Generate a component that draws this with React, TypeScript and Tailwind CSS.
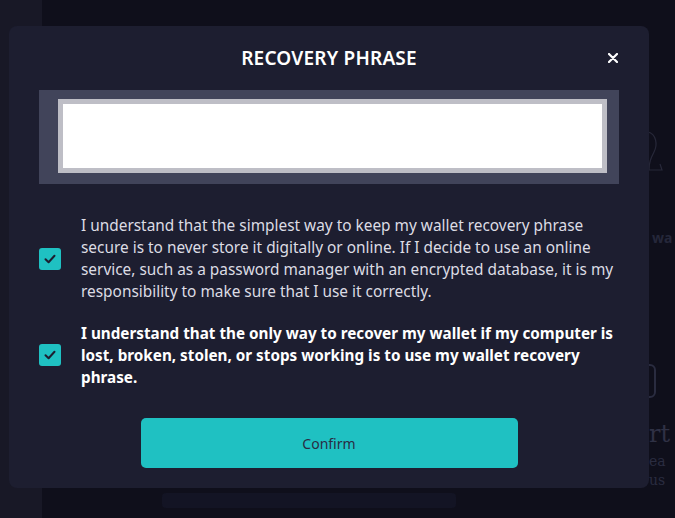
function CheckBox() {
  return (
    <div className="w-[22px] h-[22px] shrink-0 rounded-[3px] bg-[#1fc1c2] flex items-center justify-center">
      <svg width="12" height="10" viewBox="0 0 12 10" fill="none">
        <path d="M1.5 5.2 L4.6 8.2 L10.5 1.8" stroke="#1d1e30" strokeWidth="2" strokeLinecap="round" strokeLinejoin="round" />
      </svg>
    </div>
  );
}

export default function App() {
  return (
    <div
      className="relative w-[675px] h-[518px] overflow-hidden bg-[#0f0f1b]"
      style={{ fontFamily: '"Noto Sans", "Open Sans", sans-serif' }}
    >
      {/* page behind the overlay */}
      <div className="absolute left-0 top-0 w-[42px] h-full bg-[#181826]" />
      <svg className="absolute left-[646px] top-[130px]" width="20" height="46" viewBox="0 0 20 46" fill="none">
        <path d="M2 2 C10 4 12 14 8 22 C5 28 3 32 3 40 L16 40 L14 34" stroke="#272839" strokeWidth="1.2" />
      </svg>
      <div className="absolute left-[652px] top-[227px] text-[14px] font-bold text-[#25273a]">wa</div>
      <div className="absolute left-[630px] top-[364px] w-[26px] h-[34px] rounded-[6px] border-2 border-[#2a2c40]" />
      <div className="absolute left-[649px] top-[420px] text-[24px] leading-[28px] text-[#2f3145]" style={{ fontFamily: '"DejaVu Serif", serif' }}>
        rt
      </div>
      <div className="absolute left-[649px] top-[452px] text-[14px] leading-[19px] text-[#2a2c40]" style={{ fontFamily: '"DejaVu Serif", serif' }}>
        <div>ea</div>
        <div>us</div>
      </div>
      <div className="absolute left-[162px] top-[493px] w-[294px] h-[15px] rounded-[4px] bg-[#131424]" />

      {/* modal */}
      <div className="absolute left-[9px] top-[26px] w-[640px] h-[462px] rounded-[8px] bg-[#1d1e30] px-[30px] pb-[20px] flex flex-col">
        <div className="relative h-[64px] flex items-center justify-center">
          <h2 className="text-[19px] font-semibold text-white tracking-[0.2px]">RECOVERY PHRASE</h2>
          <svg className="absolute right-[1px] top-[27px]" width="10" height="10" viewBox="0 0 10 10" fill="none">
            <path d="M1 1 L9 9 M9 1 L1 9" stroke="white" strokeWidth="2.2" strokeLinecap="round" />
          </svg>
        </div>

        <div className="h-[94px] bg-[#41445a] pt-[9px] pb-[11px] pl-[19px] pr-[12px]">
          <div className="w-full h-full border-[5px] border-[#bebec6] bg-white" />
        </div>

        <div className="mt-[31px] flex items-center gap-[20px]">
          <CheckBox />
          <p className="text-[15.4px] leading-[22px] text-[#dcdce4] whitespace-nowrap">
            I understand that the simplest way to keep my wallet recovery phrase
            <br />
            secure is to never store it digitally or online. If I decide to use an online
            <br />
            service, such as a password manager with an encrypted database, it is my
            <br />
            responsibility to make sure that I use it correctly.
          </p>
        </div>

        <div className="mt-[19px] flex items-center gap-[20px]">
          <CheckBox />
          <p className="text-[15.25px] leading-[22px] font-bold text-white whitespace-nowrap">
            I understand that the only way to recover my wallet if my computer is
            <br />
            lost, broken, stolen, or stops working is to use my wallet recovery
            <br />
            phrase.
          </p>
        </div>

        <button className="mt-[30px] mx-auto w-[377px] h-[50px] rounded-[5px] bg-[#1fc1c2] text-[14px] text-[#2a2c44]">
          Confirm
        </button>
      </div>
    </div>
  );
}
